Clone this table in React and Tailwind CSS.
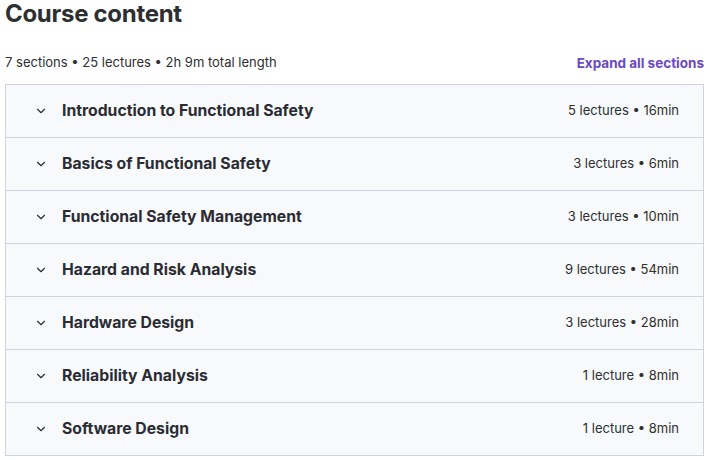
import { ChevronDown } from "lucide-react";

const SECTIONS = [
  { title: "Introduction to Functional Safety", meta: "5 lectures • 16min" },
  { title: "Basics of Functional Safety", meta: "3 lectures • 6min" },
  { title: "Functional Safety Management", meta: "3 lectures • 10min" },
  { title: "Hazard and Risk Analysis", meta: "9 lectures • 54min" },
  { title: "Hardware Design", meta: "3 lectures • 28min" },
  { title: "Reliability Analysis", meta: "1 lecture • 8min" },
  { title: "Software Design", meta: "1 lecture • 8min" },
];

export default function App() {
  return (
    <div className="w-[709px] h-[460px] overflow-hidden bg-white px-[5px] text-[#2d2f31]"
      style={{ fontFamily: "Inter, 'Noto Sans', sans-serif" }}>
      <h2 className="text-[24px] leading-[28px] font-bold tracking-[-0.3px]">Course content</h2>

      <div className="flex items-center justify-between mt-[26px] h-[18px]">
        <span className="text-[13px]">7 sections • 25 lectures • 2h 9m total length</span>
        <button className="text-[13.5px] font-bold text-[#6a48c6]">Expand all sections</button>
      </div>

      <div className="mt-[12px] border border-[#d1d2e0] border-b-0">
        {SECTIONS.map((s) => (
          <div key={s.title}
            className="flex items-center justify-between h-[53px] bg-[#f7f9fa] border-b border-[#d1d2e0] pl-[28px] pr-[24px]">
            <div className="flex items-center gap-[14px]">
              <ChevronDown size={14} strokeWidth={2} className="text-[#2d2f31]" />
              <span className="text-[15.75px] font-bold text-[#2b2c33]">{s.title}</span>
            </div>
            <span className="text-[13px]">{s.meta}</span>
          </div>
        ))}
      </div>
    </div>
  );
}
